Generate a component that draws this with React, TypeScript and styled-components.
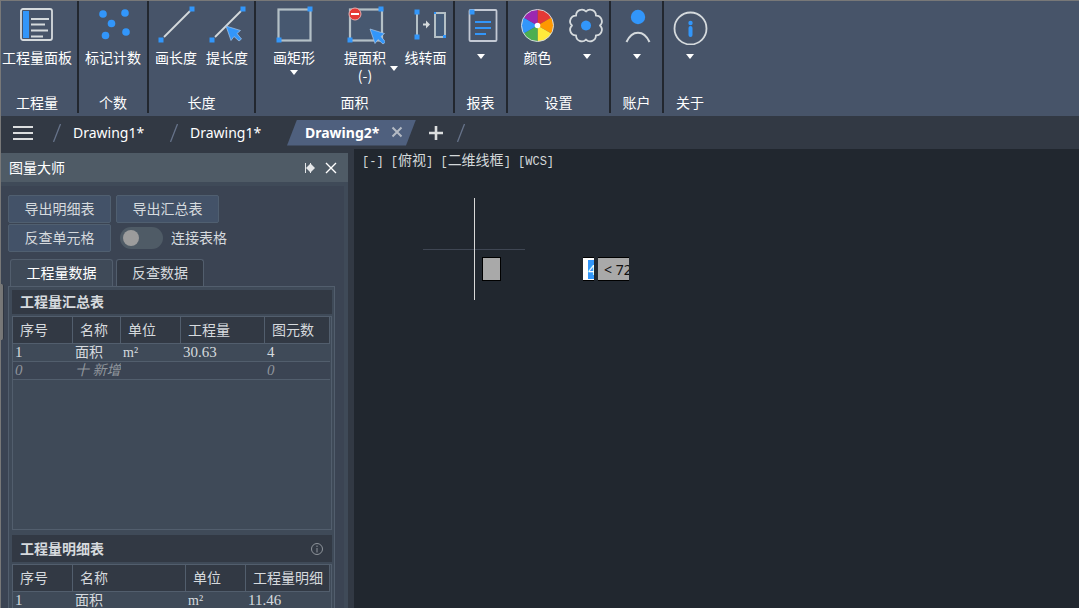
import React from 'react';
import styled, { createGlobalStyle } from 'styled-components';

const c = {
  ribbon: '#475469',
  divider: '#22272f',
  bar: '#323944',
  canvas: '#21272f',
  panelHead: '#4f5b66',
  panel: '#3b4453',
  frame: '#3f4a58',
  line: '#525e6d',
  edge: '#787878',
  blue: '#3296fa',
  pale: '#d5dadd',
  text: '#d6dade',
};

const Global = createGlobalStyle`
  * { box-sizing: border-box; }
  html, body { margin: 0; background: ${c.bar}; }
  body, button, input { font-family: "Noto Sans", "Noto Sans CJK SC", sans-serif; font-size: 14px; }
  button { border: 0; padding: 0; margin: 0; background: none; color: inherit; cursor: pointer; }
`;

const Window = styled.div`
  display: flex;
  flex-direction: column;
  height: 100vh;
  overflow: hidden;
  background: ${c.bar};
  color: #fff;
  border-left: 1px solid ${c.edge};
`;

/* ---------- ribbon ---------- */
const Ribbon = styled.header`
  display: flex;
  flex: none;
  padding-bottom: 3px;
  background: ${c.ribbon};
  border-top: 1px solid ${c.edge};
`;

const Group = styled.section<{ $w: number; $last?: boolean; $end?: number }>`
  display: flex;
  flex-direction: column;
  justify-content: space-between;
  width: ${(p) => p.$w}px;
  height: 112px;
  padding: 4px ${(p) => p.$end ?? 0}px 2px 0;
  border-right: ${(p) => (p.$last ? '0' : `2px solid ${c.divider}`)};
`;

const Tools = styled.div`
  display: flex;
  justify-content: center;
`;

const GroupName = styled.div`
  line-height: 18px;
  text-align: center;
  font-family: "Noto Sans CJK SC", sans-serif;
`;

const Tool = styled.button<{ $w: number }>`
  display: flex;
  flex-direction: column;
  align-items: center;
  justify-content: flex-start;
  width: ${(p) => p.$w}px;
  font-family: "Noto Sans CJK SC", sans-serif;
  line-height: 18px;
  white-space: nowrap;
`;

const ToolText = styled.span`
  margin-top: 3px;
`;

const SplitText = styled.span`
  display: grid;
  grid-template-columns: 1fr auto 1fr;
  align-items: center;
  justify-items: end;
  align-self: stretch;
  margin-top: 3px;
  text-align: center;
`;

const Caret = styled.i<{ $gap?: number }>`
  width: 0;
  height: 0;
  margin-top: ${(p) => p.$gap ?? 0}px;
  border: 4px solid transparent;
  border-top: 5px solid #fff;
  border-bottom: 0;
`;

const Art = styled.svg`
  display: block;
  flex: none;
  width: 40px;
  height: 40px;
  fill: none;
`;

const Dot = ({ x, y }: { x: number; y: number }) => (
  <rect x={x - 2.5} y={y - 2.5} width="5" height="5" fill={c.blue} />
);
const Cursor = ({ x, y }: { x: number; y: number }) => (
  <path
    transform={`translate(${x} ${y})`}
    d="M0 0L14.500 4.500L11 7.500L15.500 13L13 15L8 10.500L5 14.500Z"
    fill={c.blue}
    stroke="#a9c6e6"
    strokeWidth="0.700"
  />
);

const PanelArt = () => (
  <Art>
    <rect x="4" y="4" width="31" height="31" rx="2" stroke={c.pale} strokeWidth="1.800" />
    <rect x="6" y="6" width="6" height="27" fill={c.blue} />
    <path d="M14 14h18M14 19.500h14M14 25.500h17M14 31.500h12" stroke={c.pale} strokeWidth="2" />
  </Art>
);
const CountArt = () => (
  <Art>
    <g fill={c.blue}>
      <circle cx="10" cy="9" r="3.800" />
      <circle cx="32" cy="8" r="3.800" />
      <circle cx="18.500" cy="18.500" r="3.800" />
      <circle cx="12.500" cy="30.500" r="3.800" />
      <circle cx="33" cy="27" r="3.800" />
    </g>
  </Art>
);
const LineArt = ({ pick }: { pick?: boolean }) => (
  <Art>
    <path d="M8 32L34 6" stroke={c.pale} strokeWidth="1.800" />
    <Dot x={5} y={35} />
    <Dot x={36} y={4} />
    {pick && <Cursor x={19} y={21} />}
  </Art>
);
const RectArt = () => (
  <Art>
    <rect x="4.500" y="4.500" width="32" height="31" fill="#475870" stroke="#b4c0c6" strokeWidth="2.200" />
    <Dot x={5} y={35} />
    <Dot x={36} y={4} />
  </Art>
);
const AreaArt = () => (
  <Art>
    <rect x="5" y="4.500" width="32" height="31" fill="#475870" stroke="#b4c0c6" strokeWidth="2.200" />
    <Dot x={5} y={35} />
    <Dot x={36} y={4} />
    <circle cx="10" cy="9" r="6" fill="#e53935" stroke="#e6a9ab" strokeWidth="1" />
    <path d="M6 9h8" stroke="#fff" strokeWidth="2" />
    <Cursor x={25} y={24} />
  </Art>
);
const ConvertArt = () => (
  <Art>
    <path d="M11 8v24" stroke="#b4c0c6" strokeWidth="2" />
    <Dot x={11} y={7} />
    <Dot x={11} y={32} />
    <path d="M17 19.500h5" stroke={c.pale} strokeWidth="2" />
    <path d="M20 15.500l4 4l-4 4z" fill={c.pale} />
    <rect x="29" y="8" width="10" height="24" fill="#465d7a" stroke="#b4c0c6" strokeWidth="2" />
    <rect x="28" y="7" width="2" height="2" fill={c.blue} />
    <rect x="37" y="30" width="3" height="3" fill={c.blue} />
  </Art>
);
const ReportArt = () => (
  <Art>
    <rect x="8.500" y="5" width="27" height="31" rx="1" stroke="#c3c9d4" strokeWidth="1.800" />
    <Dot x={11} y={7} />
    <path d="M14 17h16M14 23h16M14 29h11" stroke={c.blue} strokeWidth="2" />
  </Art>
);
const wheel = ['#e53935', '#ff9800', '#ffeb3b', '#4caf50', '#3296fa', '#9c27b0'];
const ColorArt = () => (
  <Art>
    <g transform="translate(19.500 20.500)">
      {wheel.map((fill, i) => (
        <path key={fill} d="M0 0V-16A16 16 0 0 1 13.860 -8Z" fill={fill} transform={`rotate(${i * 60})`} />
      ))}
      <circle r="16" stroke={c.pale} strokeWidth="1" />
      <circle r="2.800" fill="#fff" />
    </g>
  </Art>
);
const lobes = (() => {
  const pt = (i: number) => {
    const a = ((i * 45 + 22.5) * Math.PI) / 180;
    return `${(14 * Math.cos(a)).toFixed(2)} ${(14 * Math.sin(a)).toFixed(2)}`;
  };
  let d = `M${pt(0)}`;
  for (let i = 1; i <= 8; i++) d += `A5.700 5.700 0 0 1 ${pt(i)}`;
  return d + 'Z';
})();
const GearArt = () => (
  <Art>
    <g transform="translate(19 20.500) rotate(22.500)">
      <path d={lobes} stroke={c.pale} strokeWidth="1.800" strokeLinejoin="round" />
      <circle r="5" fill={c.blue} />
    </g>
  </Art>
);
const UserArt = () => (
  <Art>
    <circle cx="21" cy="12" r="7.200" fill={c.blue} />
    <path d="M9.500 37C15 24.500 27 24.500 32.500 37" stroke={c.pale} strokeWidth="2" />
  </Art>
);
const AboutArt = () => (
  <Art>
    <circle cx="20.500" cy="23.500" r="16" stroke={c.pale} strokeWidth="1.800" />
    <circle cx="20.500" cy="18" r="2.200" fill={c.blue} />
    <path d="M20.500 23v7" stroke={c.blue} strokeWidth="4" strokeLinecap="round" />
  </Art>
);

/* ---------- drawing tabs ---------- */
const TabBar = styled.nav`
  display: flex;
  flex: none;
  align-items: center;
  height: 33px;
  padding-left: 12px;
`;

const Menu = styled.button`
  display: grid;
  gap: 4px;
  width: 20px;
  margin-right: 20px;
  i { height: 2px; background: #dcdedf; }
`;

const FileTab = styled.button`
  display: flex;
  align-items: center;
  gap: 12px;
  width: 117px;
  line-height: 24px;
`;

const ActiveTab = styled.div`
  display: flex;
  align-items: center;
  justify-content: space-between;
  width: 129px;
  height: 26px;
  padding: 0 13px 0 18px;
  background: #4f607e;
  clip-path: polygon(10px 0, 100% 0, calc(100% - 10px) 100%, 0 100%);
  > button:first-child { font-weight: 700; }
`;

const AddTab = styled.button`
  display: flex;
  margin: 0 14px 0 13px;
`;

const Slash = () => (
  <svg width="8" height="18" aria-hidden="true">
    <path d="M7.500 0L0.500 18" stroke="#66738a" strokeWidth="1.300" />
  </svg>
);

/* ---------- side panel ---------- */
const Work = styled.div`
  display: flex;
  flex: 1;
  min-height: 0;
`;

const Side = styled.aside`
  position: relative;
  display: flex;
  flex: none;
  flex-direction: column;
  width: 347px;
  margin: 4px 6px 0 0;
  &::before {
    content: '';
    position: absolute;
    left: -1px;
    top: 131px;
    width: 3px;
    height: 56px;
    background: #767676;
    border-right: 1px solid #2f3540;
    border-radius: 0 2px 2px 0;
  }
`;

const SideHead = styled.div`
  display: flex;
  flex: none;
  align-items: center;
  height: 29px;
  padding: 0 11px 0 8px;
  background: ${c.panelHead};
  h1 { flex: 1; margin: 0; font-size: 14px; font-weight: 400; line-height: 20px; }
  button { display: flex; margin-left: 9px; }
`;

const SideBody = styled.div`
  display: flex;
  flex: 1;
  flex-direction: column;
  min-height: 0;
  padding: 9px 9px 0 7px;
  background: ${c.panel};
  border: solid ${c.frame};
  border-width: 4px 4px 0 0;
  color: ${c.text};
`;

const Actions = styled.div`
  display: grid;
  grid-template-columns: 103px 103px;
  gap: 1px 5px;
  flex: none;
`;

const Action = styled.button`
  height: 28px;
  background: #435268;
  border: 1px solid #505f70;
  border-radius: 2px;
  line-height: 20px;
`;

const Toggle = styled.label`
  display: flex;
  align-items: center;
  gap: 8px;
  padding-left: 4px;
  line-height: 20px;
  white-space: nowrap;
  input {
    appearance: none;
    flex: none;
    width: 43px;
    height: 22px;
    margin: 0;
    padding: 3px;
    border-radius: 11px;
    background: #4f5b66;
  }
  input::before {
    content: '';
    display: block;
    width: 16px;
    height: 16px;
    border-radius: 50%;
    background: #9c9c9c;
  }
`;

const DataTabs = styled.div`
  display: flex;
  flex: none;
  gap: 3px;
  margin: 7px 0 0 2px;
`;

const DataTab = styled.button<{ $on?: boolean }>`
  width: ${(p) => (p.$on ? 103 : 88)}px;
  height: 27px;
  background: ${(p) => (p.$on ? c.frame : c.bar)};
  border: 1px solid ${c.line};
  border-bottom: 0;
  border-radius: 3px 3px 0 0;
  color: ${(p) => (p.$on ? '#fff' : c.text)};
  line-height: 20px;
`;

const Sheet = styled.div`
  display: flex;
  flex: 1;
  flex-direction: column;
  min-height: 0;
  overflow: hidden;
  padding: 3px 2px 0 3px;
  background: ${c.frame};
  border: 1px solid ${c.line};
  border-bottom: 0;
`;

const Title = styled.h2<{ $h: number }>`
  display: flex;
  flex: none;
  align-items: center;
  justify-content: space-between;
  height: ${(p) => p.$h}px;
  margin: 0 0 2px;
  padding: 0 8px;
  background: ${c.bar};
  font-size: 14px;
  font-weight: 700;
  line-height: 20px;
`;

const Box = styled.div`
  flex: none;
  height: 214px;
  margin-bottom: 5px;
  border: 1px solid ${c.line};
`;

const Grid = styled.table`
  width: 317px;
  table-layout: fixed;
  border-collapse: separate;
  border-spacing: 0;
  th, td {
    overflow: hidden;
    padding: 0 0 0 2px;
    text-align: left;
    font-weight: 400;
    white-space: nowrap;
  }
  th {
    height: 27px;
    padding-left: 7px;
    background: ${c.bar};
    border-right: 1px solid ${c.line};
    border-bottom: 1px solid ${c.line};
    line-height: 20px;
  }
  td {
    height: 18px;
    border-bottom: 1px solid ${c.line};
    font-family: "Liberation Serif", "Noto Sans CJK SC", serif;
    line-height: 16px;
  }
`;

const NewRow = styled.tr`
  background: ${c.panel};
  color: #8f959c;
  font-style: italic;
`;

const Num = styled.span`
  font-size: 15px;
`;

/* ---------- model space ---------- */
const Space = styled.main`
  position: relative;
  flex: 1;
  overflow: hidden;
  background: ${c.canvas};
`;

const ViewLabel = styled.div`
  padding: 0 8px;
  font-family: "Noto Sans CJK SC", sans-serif;
  font-size: 14px;
  line-height: 20px;
  color: #d3d8da;
  white-space: pre;
  span { font-family: "Liberation Mono", monospace; font-size: 12px; }
`;

const CrossV = styled.i`
  position: absolute;
  left: 120px;
  top: 49px;
  width: 1px;
  height: 102px;
  background: #d8d8d8;
`;
const CrossH = styled.i`
  position: absolute;
  left: 69px;
  top: 100px;
  width: 102px;
  height: 1px;
  background: #3f4653;
`;
const Prompt = styled.div<{ $x: number; $w: number; $open?: boolean }>`
  position: absolute;
  left: ${(p) => p.$x}px;
  top: 108px;
  width: ${(p) => p.$w}px;
  height: 24px;
  overflow: hidden;
  padding-left: 6px;
  background: #a9a9a9;
  border: solid #000;
  border-width: ${(p) => (p.$open ? '1px 0' : '1px')};
  color: #111;
  line-height: 24px;
  white-space: nowrap;
`;
const Distance = styled.input`
  position: absolute;
  left: 229px;
  top: 108px;
  width: 11px;
  height: 24px;
  padding: 0 0 0 5px;
  border: solid #000;
  border-width: 1px 0;
  border-radius: 0;
  background: linear-gradient(${c.blue}, ${c.blue}) 5px 2px / 6px 19px no-repeat #fff;
  color: #fff;
`;

const M = ({ children }: { children: string }) => <span>{children}</span>;

export default function App() {
  return (
    <Window>
      <Global />
      <Ribbon>
        <Group $w={78} $end={4}>
          <Tools>
            <Tool $w={72}><PanelArt /><ToolText>工程量面板</ToolText></Tool>
          </Tools>
          <GroupName>工程量</GroupName>
        </Group>
        <Group $w={70}>
          <Tools>
            <Tool $w={68}><CountArt /><ToolText>标记计数</ToolText></Tool>
          </Tools>
          <GroupName>个数</GroupName>
        </Group>
        <Group $w={107}>
          <Tools>
            <Tool $w={51}><LineArt /><ToolText>画长度</ToolText></Tool>
            <Tool $w={51}><LineArt pick /><ToolText>提长度</ToolText></Tool>
          </Tools>
          <GroupName>长度</GroupName>
        </Group>
        <Group $w={199}>
          <Tools>
            <Tool $w={76}><RectArt /><ToolText>画矩形</ToolText><Caret $gap={4} /></Tool>
            <Tool $w={66}>
              <AreaArt />
              <SplitText><i /><span>提面积<br />(-)</span><Caret $gap={4} /></SplitText>
            </Tool>
            <Tool $w={55}><ConvertArt /><ToolText>线转面</ToolText></Tool>
          </Tools>
          <GroupName>面积</GroupName>
        </Group>
        <Group $w={53}>
          <Tools>
            <Tool $w={50} aria-label="报表"><ReportArt /><Caret $gap={9} /></Tool>
          </Tools>
          <GroupName>报表</GroupName>
        </Group>
        <Group $w={103}>
          <Tools>
            <Tool $w={57}><ColorArt /><ToolText>颜色</ToolText></Tool>
            <Tool $w={42} aria-label="设置"><GearArt /><Caret $gap={9} /></Tool>
          </Tools>
          <GroupName>设置</GroupName>
        </Group>
        <Group $w={53}>
          <Tools>
            <Tool $w={50} aria-label="账户"><UserArt /><Caret $gap={9} /></Tool>
          </Tools>
          <GroupName>账户</GroupName>
        </Group>
        <Group $w={52} $last>
          <Tools>
            <Tool $w={50} aria-label="关于"><AboutArt /><Caret $gap={9} /></Tool>
          </Tools>
          <GroupName>关于</GroupName>
        </Group>
      </Ribbon>

      <TabBar>
        <Menu aria-label="菜单"><i /><i /><i /></Menu>
        <FileTab><Slash />Drawing1*</FileTab>
        <FileTab><Slash />Drawing1*</FileTab>
        <ActiveTab>
          <button>Drawing2*</button>
          <button aria-label="关闭">
            <svg width="12" height="12"><path d="M1.500 1.500L10.500 10.500M10.500 1.500L1.500 10.500" stroke="#b4bac4" strokeWidth="2" /></svg>
          </button>
        </ActiveTab>
        <AddTab aria-label="新建">
          <svg width="14" height="14"><path d="M7 0V14M0 7H14" stroke="#dcdedf" strokeWidth="2.600" /></svg>
        </AddTab>
        <Slash />
      </TabBar>

      <Work>
        <Side>
          <SideHead>
            <h1>图量大师</h1>
            <button aria-label="自动隐藏">
              <svg width="12" height="12">
                <path d="M1.500 1V11M6.500 1V11" stroke="#e4e6e8" strokeWidth="1" />
                <path d="M6 2V10L2 6ZM7 2V10L11 6Z" fill="#e4e6e8" />
              </svg>
            </button>
            <button aria-label="关闭面板">
              <svg width="12" height="12"><path d="M1 1L11 11M11 1L1 11" stroke="#fff" strokeWidth="1.400" /></svg>
            </button>
          </SideHead>
          <SideBody>
            <Actions>
              <Action>导出明细表</Action>
              <Action>导出汇总表</Action>
              <Action>反查单元格</Action>
              <Toggle><input type="checkbox" role="switch" />连接表格</Toggle>
            </Actions>
            <DataTabs>
              <DataTab $on>工程量数据</DataTab>
              <DataTab>反查数据</DataTab>
            </DataTabs>
            <Sheet>
              <Title $h={24}>工程量汇总表</Title>
              <Box>
                <Grid>
                  <colgroup>
                    <col width="60" /><col width="48" /><col width="60" /><col width="84" /><col width="65" />
                  </colgroup>
                  <thead>
                    <tr><th>序号</th><th>名称</th><th>单位</th><th>工程量</th><th>图元数</th></tr>
                  </thead>
                  <tbody>
                    <tr>
                      <td><Num>1</Num></td><td>面积</td><td>m²</td><td><Num>30.63</Num></td><td><Num>4</Num></td>
                    </tr>
                    <NewRow>
                      <td><Num>0</Num></td><td>十 新增</td><td /><td /><td><Num>0</Num></td>
                    </NewRow>
                  </tbody>
                </Grid>
              </Box>
              <Title $h={27}>
                工程量明细表
                <svg width="14" height="14" aria-hidden="true">
                  <circle cx="7" cy="7" r="5.500" fill="none" stroke="#8f959c" />
                  <path d="M7 6V10.500M7 3.500V5" stroke="#8f959c" />
                </svg>
              </Title>
              <Box>
                <Grid>
                  <colgroup>
                    <col width="60" /><col width="113" /><col width="60" /><col width="84" />
                  </colgroup>
                  <thead>
                    <tr><th>序号</th><th>名称</th><th>单位</th><th>工程量明细</th></tr>
                  </thead>
                  <tbody>
                    <tr>
                      <td><Num>1</Num></td><td>面积</td><td>m²</td><td><Num>11.46</Num></td>
                    </tr>
                  </tbody>
                </Grid>
              </Box>
            </Sheet>
          </SideBody>
        </Side>

        <Space>
          <ViewLabel>
            <M>[-] [</M>俯视<M>] [</M>二维线框<M>] [WCS]</M>
          </ViewLabel>
          <CrossH />
          <CrossV />
          <Prompt $x={128} $w={19} />
          <Distance aria-label="距离" defaultValue="4" />
          <Prompt $x={244} $w={31} $open>&lt; 72</Prompt>
        </Space>
      </Work>
    </Window>
  );
}
